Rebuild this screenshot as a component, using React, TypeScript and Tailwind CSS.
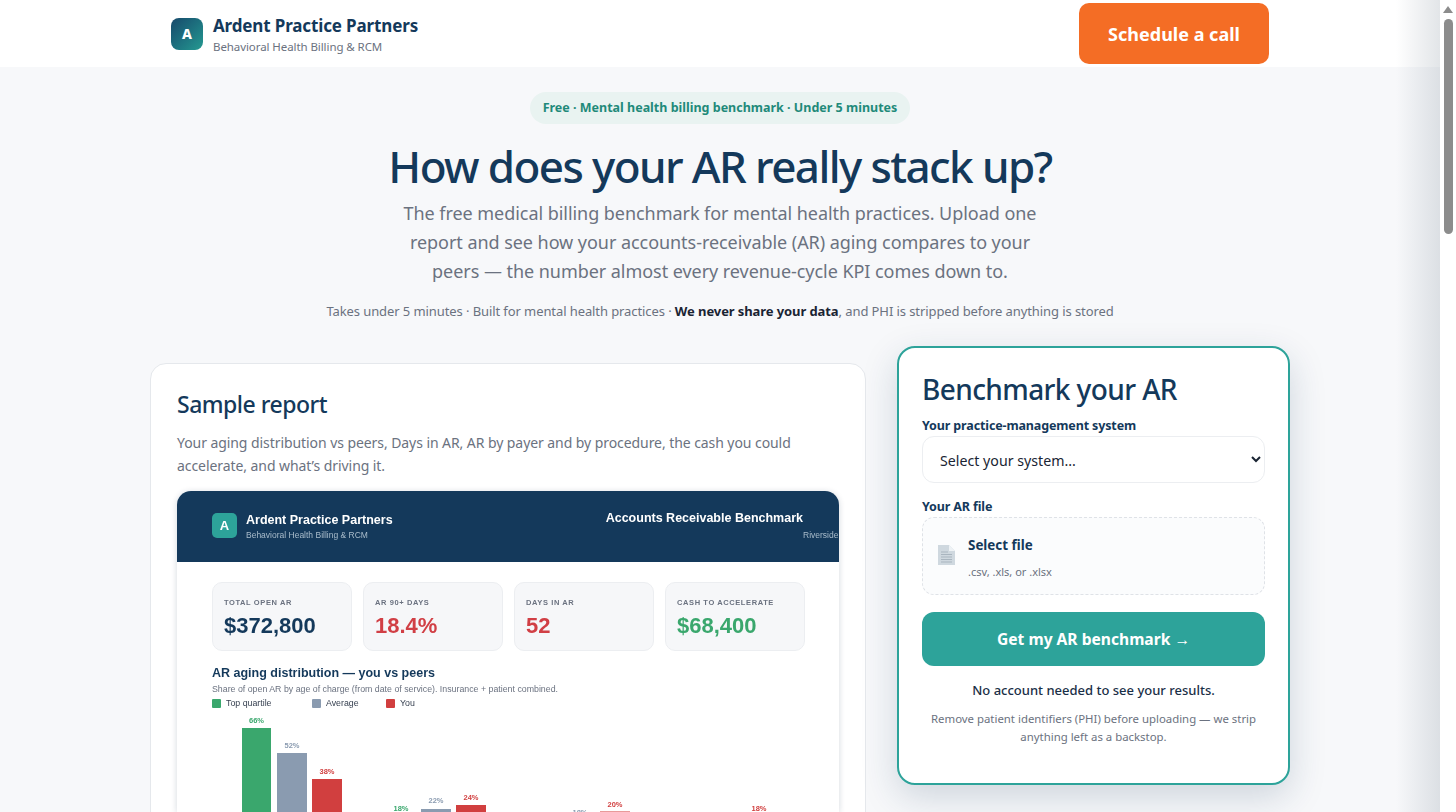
const sans = "font-['Noto_Sans',sans-serif]";
const report = "font-['Liberation_Sans',sans-serif]";

const kpis = [
  { label: "TOTAL OPEN AR", value: "$372,800", color: "text-[#14395b]" },
  { label: "AR 90+ DAYS", value: "18.4%", color: "text-[#d13f45]" },
  { label: "DAYS IN AR", value: "52", color: "text-[#d13f45]" },
  { label: "CASH TO ACCELERATE", value: "$68,400", color: "text-[#3aa76d]" },
];

const bars = [
  { left: 242, width: 29, height: 84, color: "bg-[#3aa76d]" },
  { left: 277, width: 30, height: 59, color: "bg-[#8a9bb0]" },
  { left: 312, width: 30, height: 33, color: "bg-[#d13f3f]" },
  { left: 421, width: 30, height: 3, color: "bg-[#8a9bb0]" },
  { left: 456, width: 30, height: 7, color: "bg-[#d13f3f]" },
  { left: 600, width: 30, height: 1, color: "bg-[#e99a9a]" },
];

const barLabels = [
  { left: 242, top: 716, width: 29, text: "66%", color: "text-[#3aa76d]" },
  { left: 277, top: 741, width: 30, text: "52%", color: "text-[#8a9bb0]" },
  { left: 312, top: 767, width: 30, text: "38%", color: "text-[#d13f3f]" },
  { left: 386, top: 804, width: 30, text: "18%", color: "text-[#3aa76d]" },
  { left: 421, top: 796, width: 30, text: "22%", color: "text-[#8a9bb0]" },
  { left: 456, top: 793, width: 30, text: "24%", color: "text-[#d13f3f]" },
  { left: 565, top: 808, width: 30, text: "18%", color: "text-[#8a9bb0]" },
  { left: 600, top: 800, width: 30, text: "20%", color: "text-[#d13f3f]" },
  { left: 744, top: 804, width: 30, text: "18%", color: "text-[#d13f3f]" },
];

function FileIcon() {
  return (
    <svg width="17" height="20" viewBox="0 0 17 20" className="mt-[10px] shrink-0">
      <path d="M0 0h11l6 6v14H0z" fill="#cfd8df" />
      <path d="M11 0l6 6h-6z" fill="#eef2f5" />
      <path d="M3 7h7M3 9.5h11M3 12h11M3 14.5h11M3 17h11" stroke="#a9b5bf" strokeWidth="1" />
    </svg>
  );
}

function SampleReport() {
  return (
    <div className={`relative mt-[14px] h-[321px] w-[662px] shrink-0 overflow-hidden rounded-t-[14px] bg-white shadow-[0_1px_6px_rgba(15,40,70,0.18)] blur-[0.3px] ${report}`}>
      <div className="flex h-[71px] bg-[#14395b] pl-[35px]">
        <div className="mt-[22px] flex h-[25px] w-[25px] items-center justify-center rounded-[5px] bg-[#2da39a] text-[13px] font-bold text-white">A</div>
        <div className="ml-[9px] mt-[21px]">
          <div className="text-[12.5px] font-bold leading-[16px] text-white">Ardent Practice Partners</div>
          <div className="mt-[1px] text-[8.5px] leading-[12px] text-[#a9bccb]">Behavioral Health Billing &amp; RCM</div>
        </div>
        <div className="ml-auto mr-[36px] mt-[19px] text-right">
          <div className="whitespace-nowrap text-[12.5px] font-bold leading-[16px] text-white">Accounts Receivable Benchmark</div>
        </div>
        <div className="absolute left-[626px] top-[38px] whitespace-nowrap text-[8.5px] leading-[12px] text-[#a9bccb]">Riverside</div>
      </div>
      <div className="flex gap-[11px] pl-[35px] pt-[20px]">
        {kpis.map((kpi) => (
          <div key={kpi.label} className="h-[69px] w-[140px] rounded-[10px] border border-[#eceef1] bg-[#f6f7f9] pl-[11px] pt-[15px]">
            <div className="text-[7.5px] font-bold leading-[10px] tracking-[0.6px] text-[#6b7280]">{kpi.label}</div>
            <div className={`mt-[5px] text-[22px] font-bold leading-[26px] ${kpi.color}`}>{kpi.value}</div>
          </div>
        ))}
      </div>
      <div className="pl-[35px] pt-[14px]">
        <div className="text-[12.5px] font-bold leading-[16px] text-[#14395b]">AR aging distribution — you vs peers</div>
        <div className="mt-[2px] text-[8.8px] leading-[12px] text-[#6b7280]">Share of open AR by age of charge (from date of service). Insurance + patient combined.</div>
        <div className="mt-[1px] flex text-[8.8px] leading-[14px] text-[#374151]">
          <div className="flex w-[100px] items-center gap-[5px]"><span className="h-[9px] w-[9px] rounded-[1px] bg-[#3aa76d]" />Top quartile</div>
          <div className="flex w-[74px] items-center gap-[5px]"><span className="h-[9px] w-[9px] rounded-[1px] bg-[#8a9bb0]" />Average</div>
          <div className="flex items-center gap-[5px]"><span className="h-[9px] w-[9px] rounded-[1px] bg-[#d13f3f]" />You</div>
        </div>
      </div>
      {bars.map((bar) => (
        <div
          key={bar.left}
          className={`absolute bottom-0 ${bar.color}`}
          style={{ left: bar.left - 177, width: bar.width, height: bar.height }}
        />
      ))}
      {barLabels.map((label) => (
        <div
          key={label.left}
          className={`absolute text-center text-[7.5px] font-bold leading-[9px] ${label.color}`}
          style={{ left: label.left - 177, top: label.top - 491, width: label.width }}
        >
          {label.text}
        </div>
      ))}
    </div>
  );
}

export default function App() {
  return (
    <div className={`flex h-[812px] w-[1456px] overflow-hidden bg-white ${sans}`}>
      <div className="relative h-full w-[1440px] shrink-0 overflow-hidden bg-[#f7f8fa]">
        <header className="flex h-[67px] items-center justify-between bg-white pl-[171px] pr-[171px]">
          <div className="flex items-center">
            <div className="flex h-[32px] w-[32px] items-center justify-center rounded-[8px] bg-gradient-to-br from-[#17496b] to-[#259a91] text-[14px] font-extrabold text-white">A</div>
            <div className="ml-[10px] mt-[3px]">
              <div className="text-[17px] font-bold leading-[22px] tracking-[-0.14px] text-[#14395b]">Ardent Practice Partners</div>
              <div className="mt-[1px] text-[11.5px] leading-[17px] tracking-[-0.08px] text-[#6b7280]">Behavioral Health Billing &amp; RCM</div>
            </div>
          </div>
          <div className="flex h-[61px] w-[190px] items-center justify-center rounded-[10px] bg-[#f46d25] pt-[2px] text-[18px] font-bold text-white">Schedule a call</div>
        </header>

        <section className="flex flex-col items-center pt-[25px] text-center">
          <div className="flex h-[32px] items-center rounded-full bg-[#e9f3f1] px-[12.5px] pt-[1px] text-[12.5px] font-bold text-[#1f8a7a]">Free · Mental health billing benchmark · Under 5 minutes</div>
          <h1 className="mt-[12px] text-[44px] font-medium leading-[60px] tracking-[-1.6px] text-[#14395b]">How does your AR really stack up?</h1>
          <p className="mt-[3px] w-[680px] text-[18px] leading-[29px] tracking-[-0.05px] text-[#6b7280]">
            The free medical billing benchmark for mental health practices. Upload one<br />
            report and see how your accounts-receivable (AR) aging compares to your<br />
            peers — the number almost every revenue-cycle KPI comes down to.
          </p>
          <p className="mt-[15px] text-[13px] leading-[20px] tracking-[-0.09px] text-[#6b7280]">
            Takes under 5 minutes · Built for mental health practices · <strong className="font-bold text-[#1a2433]">We never share your data</strong>, and PHI is stripped before anything is stored
          </p>
        </section>

        <div className="flex items-start pl-[150px] pt-[25px]">
          <div className="mt-[17px] h-[500px] w-[716px] shrink-0 rounded-[16px] border border-[#e5e8ec] bg-white px-[26px] pt-[23px]">
            <h2 className="text-[23px] font-medium leading-[34px] tracking-[-0.5px] text-[#14395b]">Sample report</h2>
            <p className="mt-[10px] text-[14px] leading-[23px] tracking-[-0.07px] text-[#6b7280]">
              Your aging distribution vs peers, Days in AR, AR by payer and by procedure, the cash you could<br />accelerate, and what’s driving it.
            </p>
            <SampleReport />
          </div>

          <div className="ml-[31px] flex w-[393px] shrink-0 flex-col">
            <div className="h-[439px] rounded-[18px] border-2 border-[#2da39a] bg-white px-[23px] pt-[22px] shadow-[0_12px_36px_rgba(20,57,91,0.18)]">
              <h2 className="text-[28px] font-medium leading-[38px] tracking-[-0.6px] text-[#14395b]">Benchmark your AR</h2>
              <div className="mt-[9px] text-[12.5px] font-bold leading-[18px] tracking-[-0.13px] text-[#14395b]">Your practice-management system</div>
              <select className="mt-[1px] h-[47px] w-full rounded-[12px] border border-[#eceef1] bg-white pl-[13px] pt-[2px] text-[14.2px] text-[#1a2433]">
                <option>Select your system...</option>
              </select>
              <div className="mt-[15px] text-[12.5px] font-bold leading-[18px] tracking-[-0.13px] text-[#14395b]">Your AR file</div>
              <div className="mt-[1px] flex h-[78px] items-start rounded-[12px] border border-dashed border-[#dfe2e7] bg-[#fbfcfd] pl-[15px] pt-[17px]">
                <FileIcon />
                <div className="ml-[13px]">
                  <div className="text-[13.4px] font-bold leading-[20px] text-[#14395b]">Select file</div>
                  <div className="mt-[9px] text-[11px] leading-[16px] text-[#6b7280]">.csv, .xls, or .xlsx</div>
                </div>
              </div>
              <div className="mt-[17px] flex h-[54px] items-center justify-center rounded-[12px] bg-[#2da39a] pt-[2px] text-[15.6px] font-bold text-white">Get my AR benchmark →</div>
              <div className="mt-[14px] text-center text-[13px] font-medium leading-[20px] text-[#1a2f47]">No account needed to see your results.</div>
              <div className="mt-[10px] text-center text-[11.4px] leading-[18px] text-[#6b7280]">
                Remove patient identifiers (PHI) before uploading — we strip<br />anything left as a backstop.
              </div>
            </div>
          </div>
        </div>
        <div className="pointer-events-none absolute inset-y-0 right-0 w-[44px] bg-gradient-to-r from-transparent to-[rgba(110,125,140,0.2)]" />
      </div>

      <div className="relative h-full w-[16px] shrink-0 bg-white">
        <svg width="10" height="7" viewBox="0 0 10 7" className="mx-auto mt-[6px]"><path d="M5 0l5 7H0z" fill="#8c8c8c" /></svg>
        <div className="mx-auto mt-[6px] h-[215px] w-[9px] rounded-full bg-[#8c8c8c]" />
      </div>
    </div>
  );
}
